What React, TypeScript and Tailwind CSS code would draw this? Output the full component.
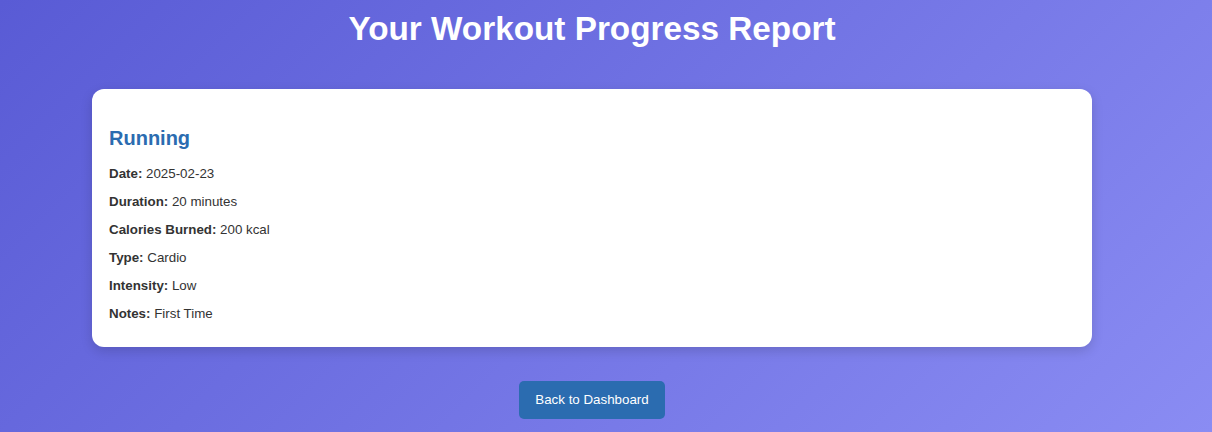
const rows: [string, string][] = [
  ["Date:", "2025-02-23"],
  ["Duration:", "20 minutes"],
  ["Calories Burned:", "200 kcal"],
  ["Type:", "Cardio"],
  ["Intensity:", "Low"],
  ["Notes:", "First Time"],
];

export default function App() {
  return (
    <div className="min-h-[432px] w-full bg-[linear-gradient(135deg,#595bd5,#8a8cf3)] font-['Liberation_Sans',Arial,sans-serif]">
      <div className="flex w-[1184px] flex-col items-center">
        <h1 className="mt-[10px] text-[33.3px] leading-[38px] font-bold text-white">Your Workout Progress Report</h1>

        <div className="mt-[41px] w-[1000px] rounded-[12px] bg-white px-[17px] pt-[38px] pb-[26px] shadow-[0_4px_12px_rgba(0,0,0,0.15)]">
          <h2 className="text-[20px] leading-[23px] font-bold text-[#2b6cb0]">Running</h2>
          <div className="mt-[16px] flex flex-col gap-[13px] text-[13.33px] leading-[15px] text-[#333]">
            {rows.map(([k, v]) => (
              <p key={k}>
                <span className="font-bold">{k}</span> {v}
              </p>
            ))}
          </div>
        </div>

        <button className="mt-[34px] h-[38px] rounded-[5px] bg-[#2b6cb0] px-[16px] text-[13.33px] text-white">
          Back to Dashboard
        </button>
      </div>
    </div>
  );
}
